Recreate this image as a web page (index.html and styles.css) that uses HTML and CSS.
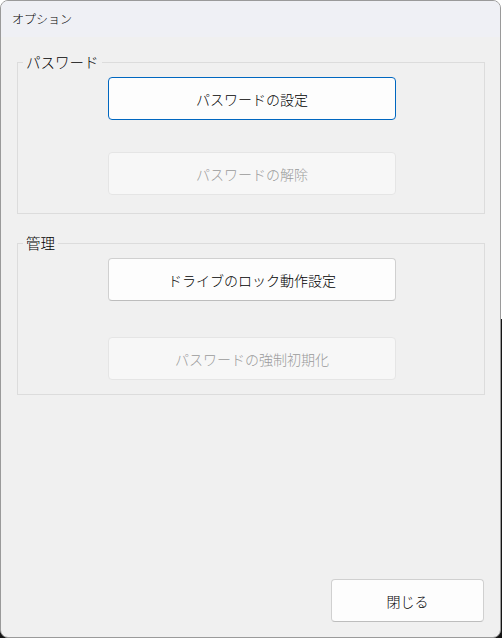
FILE: index.html
```html
<!DOCTYPE html>
<html lang="ja">
<head>
<meta charset="utf-8">
<title>オプション</title>
<link rel="stylesheet" href="styles.css">
</head>
<body>
<div class="window">
  <div class="titlebar">オプション</div>
  <div class="content">
    <fieldset class="group group-password">
      <legend>パスワード</legend>
      <div class="group-body">
        <button class="btn btn-focus">パスワードの設定</button>
        <button class="btn" disabled>パスワードの解除</button>
      </div>
    </fieldset>
    <fieldset class="group group-manage">
      <legend>管理</legend>
      <div class="group-body">
        <button class="btn">ドライブのロック動作設定</button>
        <button class="btn" disabled>パスワードの強制初期化</button>
      </div>
    </fieldset>
    <div class="footer">
      <button class="btn btn-close">閉じる</button>
    </div>
  </div>
</div>
</body>
</html>
```

FILE: styles.css
```css
html, body {
  margin: 0;
  padding: 0;
}
body {
  width: 502px;
  height: 638px;
  background: linear-gradient(#ffffff 0, #ffffff 50%, #151515 50%, #151515 100%);
  font-family: "Noto Sans CJK JP", "Noto Sans", sans-serif;
  font-weight: 300;
  overflow: hidden;
}
.window {
  box-sizing: border-box;
  width: 501px;
  height: 638px;
  border: 1px solid #9a9a9a;
  border-radius: 8px;
  background: #f0f0f0;
  overflow: hidden;
  display: flex;
  flex-direction: column;
}
.titlebar {
  height: 36px;
  flex: none;
  background: #eff0f5;
  font-size: 12px;
  line-height: 36px;
  padding-left: 11px;
  color: #000;
}
.content {
  flex: 1;
  display: flex;
  flex-direction: column;
  padding: 16px 15px 15px 16px;
}
.group {
  margin: 0;
  padding: 6px 0 0 5px;
  border: 1px solid #dcdcdc;
  min-width: 0;
}
.group legend {
  padding: 0 3px;
  font-size: 14.5px;
  line-height: 18px;
  color: #000;
}
.group-body {
  display: flex;
  flex-direction: column;
  padding-left: 85px;
}
.group-password .group-body {
  gap: 32px;
  padding-bottom: 18px;
}
.group-manage {
  margin-top: 20px;
}
.group-manage .group-body {
  gap: 36px;
  padding-bottom: 14px;
}
.btn {
  box-sizing: border-box;
  width: 288px;
  height: 43px;
  border: 1px solid #d0d0d0;
  border-bottom-color: #bdbdbd;
  border-radius: 4px;
  background: #fdfdfd;
  font-family: "Noto Sans CJK JP", "Noto Sans", sans-serif;
  font-weight: 300;
  font-size: 14px;
  color: #000;
  padding: 0;
  margin: 0;
}
.btn-focus {
  border: 1px solid #0067c0;
}
.btn:disabled {
  background: #f7f7f7;
  border-color: #e5e5e5;
  color: #9a9a9a;
}
.footer {
  margin-top: auto;
  display: flex;
  justify-content: flex-end;
  padding-right: 1px;
}
.btn-close {
  width: 153px;
}
```
